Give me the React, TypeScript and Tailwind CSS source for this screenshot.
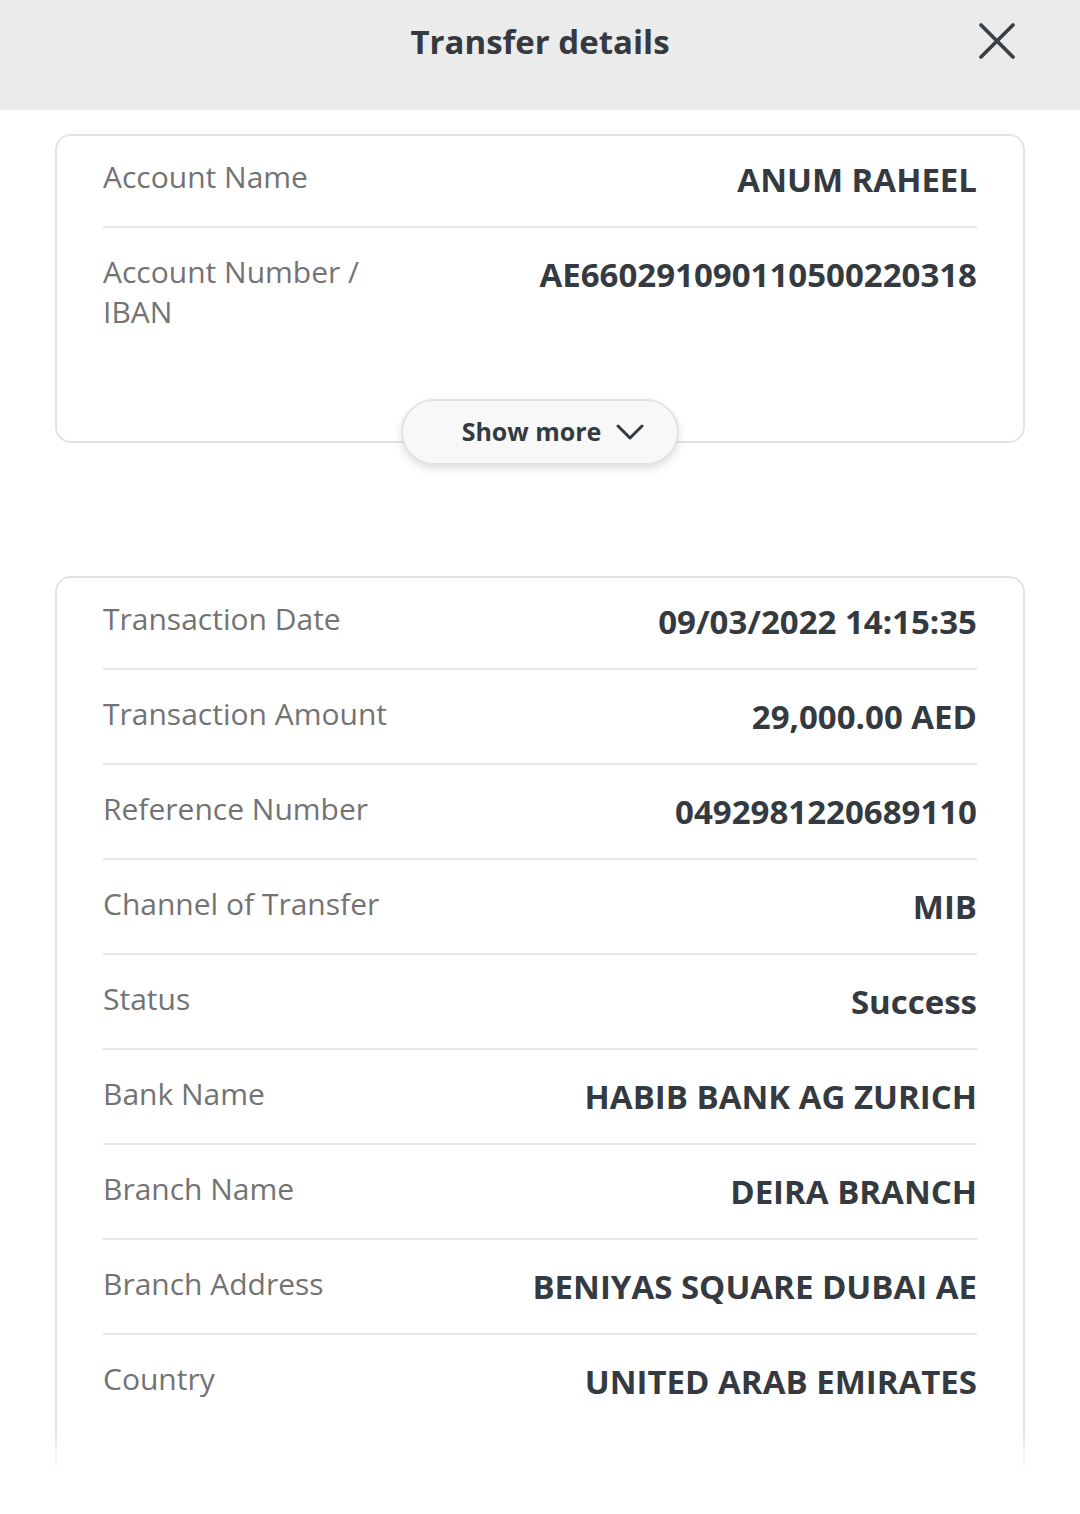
const account = [
  { label: "Account Name", value: "ANUM RAHEEL" },
  { label: "Account Number / IBAN", value: "AE660291090110500220318" },
];

const details = [
  { label: "Transaction Date", value: "09/03/2022 14:15:35" },
  { label: "Transaction Amount", value: "29,000.00 AED" },
  { label: "Reference Number", value: "0492981220689110" },
  { label: "Channel of Transfer", value: "MIB" },
  { label: "Status", value: "Success" },
  { label: "Bank Name", value: "HABIB BANK AG ZURICH" },
  { label: "Branch Name", value: "DEIRA BRANCH" },
  { label: "Branch Address", value: "BENIYAS SQUARE DUBAI AE" },
  { label: "Country", value: "UNITED ARAB EMIRATES" },
];

function Row({ label, value, first }: { label: string; value: string; first?: boolean }) {
  return (
    <div
      className={`flex items-start justify-between gap-6 pb-[23px] ${
        first ? "pt-[21px]" : "pt-[24px] border-t-2 border-[#e6e6e6]"
      }`}
    >
      <div className="w-[300px] shrink-0 text-[30px] leading-[40px] text-[#737373]">{label}</div>
      <div className="flex-1 text-right text-[33px] leading-[46px] font-bold text-[#343a40]">
        {value}
      </div>
    </div>
  );
}

export default function App() {
  return (
    <div
      className="relative h-[1514px] overflow-hidden bg-white"
      style={{ fontFamily: '"Open Sans", "Noto Sans", sans-serif' }}
    >
      <header className="relative h-[110px] bg-[#ebebeb]">
        <h1 className="pt-[18px] text-center text-[33px] leading-[48px] font-bold text-[#343a40]">
          Transfer details
        </h1>
        <button className="absolute right-[64px] top-[22px] text-[#3a4046]" aria-label="Close">
          <svg width="38" height="38" viewBox="0 0 38 38" fill="none" stroke="currentColor" strokeWidth="3.8" strokeLinecap="round">
            <path d="M3 3L35 35M35 3L3 35" />
          </svg>
        </button>
      </header>

      <section className="relative mx-[55px] mt-[24px] rounded-[16px] border-2 border-[#e3e3e3] px-[46px] pb-[86px]">
        {account.map((r, i) => (
          <Row key={r.label} label={r.label} value={r.value} first={i === 0} />
        ))}
        <button className="absolute -bottom-[24px] left-1/2 flex h-[66px] w-[278px] -translate-x-1/2 items-center justify-center gap-[15px] rounded-full border-2 border-[#e2e2e2] bg-[#f8f8f8] pl-[26px] shadow-[0_4px_8px_rgba(0,0,0,0.12)]">
          <span className="text-[25px] font-bold text-[#343a40]">Show more</span>
          <svg width="28" height="18" viewBox="0 0 28 18" fill="none" stroke="#343a40" strokeWidth="3" strokeLinecap="round" strokeLinejoin="round">
            <path d="M2 3L14 15L26 3" />
          </svg>
        </button>
      </section>

      <section className="mx-[55px] mt-[133px] rounded-[16px] border-2 border-[#e3e3e3] px-[46px] pb-[200px]">
        {details.map((r, i) => (
          <Row key={r.label} label={r.label} value={r.value} first={i === 0} />
        ))}
      </section>

      <div className="pointer-events-none absolute inset-x-0 top-[1430px] h-[45px] bg-gradient-to-b from-white/0 to-white" />
      <div className="pointer-events-none absolute inset-x-0 top-[1474px] bottom-0 bg-white" />
    </div>
  );
}
